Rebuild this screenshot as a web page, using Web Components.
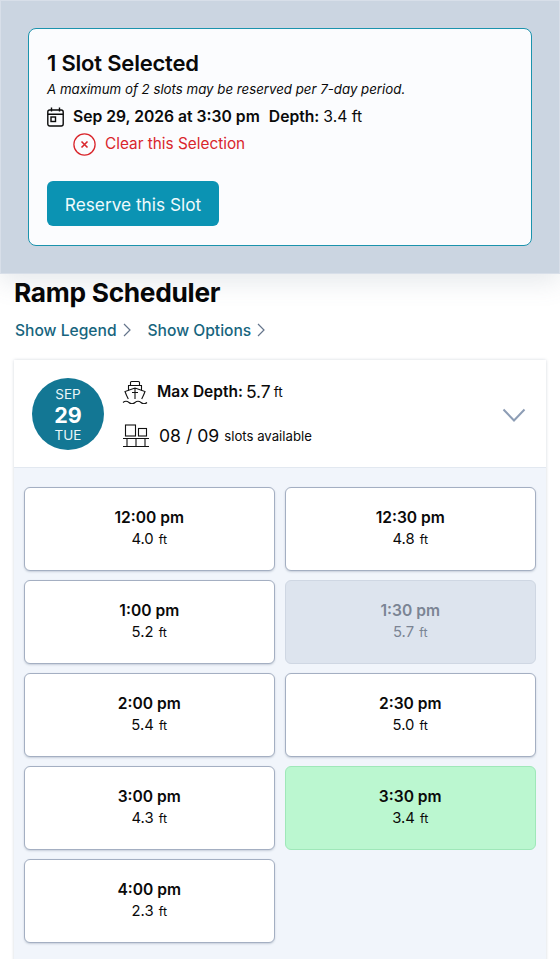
<!DOCTYPE html>
<html lang="en">
<head>
<meta charset="utf-8">
<title>Ramp Scheduler</title>
<style>
    html, body { margin: 0; height: 959px; overflow: hidden; background: #fff; }
    body { font-family: Inter, "Liberation Sans", sans-serif; color: #0a0a0a; }
</style>
</head>
<body>
<selection-panel></selection-panel>
<ramp-scheduler>
    <day-card month="SEP" day="29" weekday="TUE" depth="5.7" open="08" total="09">
        <time-slot time="12:00 pm" depth="4.0"></time-slot>
        <time-slot time="12:30 pm" depth="4.8"></time-slot>
        <time-slot time="1:00 pm" depth="5.2"></time-slot>
        <time-slot time="1:30 pm" depth="5.7" state="taken"></time-slot>
        <time-slot time="2:00 pm" depth="5.4"></time-slot>
        <time-slot time="2:30 pm" depth="5.0"></time-slot>
        <time-slot time="3:00 pm" depth="4.3"></time-slot>
        <time-slot time="3:30 pm" depth="3.4" state="selected"></time-slot>
        <time-slot time="4:00 pm" depth="2.3"></time-slot>
    </day-card>
</ramp-scheduler>
<script>
class SelectionPanel extends HTMLElement {
    constructor() {
        super();
        this.attachShadow({mode: 'open'});
        this.shadowRoot.innerHTML = `<style>
                :host {
                    display: block;
                    box-sizing: border-box;
                    height: 274px;
                    padding: 27px;
                    background: #cbd5e1;
                    border: 1px solid #d8dfe9;
                    position: relative;
                    z-index: 1;
                    box-shadow: 0 8px 24px rgba(100, 116, 139, .16);
                }
                .card {
                    box-sizing: border-box;
                    height: 218px;
                    padding: 20px 18px 0;
                    background: #fbfcfe;
                    border: 1px solid #1b93ad;
                    border-radius: 8px;
                }
                h2 { margin: 0; font-size: 22px; line-height: 28px; font-weight: 600; letter-spacing: -.2px; }
                .note { font-size: 13.27px; line-height: 20px; font-style: italic; margin-top: 2px; }
                .when { display: flex; align-items: center; gap: 9px; font-size: 15.7px; line-height: 22px; margin-top: 7px; font-weight: 600; }
                .when span span { font-weight: 400; }
                .clear { display: flex; align-items: center; gap: 9px; margin: 4px 0 0 26px; color: #d9262c; font-size: 15.35px; line-height: 24px; }
                button {
                    display: block;
                    width: 172px;
                    height: 45px;
                    margin-top: 25px;
                    padding: 1px 0 0;
                    border: 0;
                    border-radius: 6px;
                    background: #0b93b3;
                    color: #f0fafc;
                    font: 400 17.25px Inter, "Liberation Sans", sans-serif;
                }
                svg { display: block; flex: none; fill: none; stroke: currentColor; }
            </style>
            <div class="card">
                <h2>1 Slot Selected</h2>
                <div class="note">A maximum of 2 slots may be reserved per 7-day period.</div>
                <div class="when">
                    <svg width="17" height="20" viewBox="0 0 17 20" stroke-width="1.4">
                        <rect x=".8" y="3" width="15.4" height="16" rx="2"/>
                        <path d="M.8 7.2h15.4M4.5.6v4M12.5.6v4"/>
                        <rect x="4" y="10" width="4.5" height="4.5"/>
                    </svg>
                    <span>Sep 29, 2026 at 3:30 pm</span>
                    <span>Depth: <span>3.4 ft</span></span>
                </div>
                <div class="clear">
                    <svg width="23" height="23" viewBox="0 0 23 23" stroke-width="1.3">
                        <circle cx="11.5" cy="11.5" r="10.6"/>
                        <path stroke-width="1.6" d="M8.5 8.5l6 6M14.5 8.5l-6 6"/>
                    </svg>
                    <span>Clear this Selection</span>
                </div>
                <button type="button">Reserve this Slot</button>
            </div>`;
    }
}

class RampScheduler extends HTMLElement {
    constructor() {
        super();
        this.attachShadow({mode: 'open'});
        this.shadowRoot.innerHTML = `<style>
                :host { display: block; padding: 0 14px; }
                h1 { margin: 0; font-size: 26.3px; line-height: 36px; font-weight: 700; letter-spacing: -.3px; color: #050505; padding: 1px 0 0; }
                .links { display: flex; gap: 17px; margin: 8px 0 19px; height: 22px; align-items: center; padding-left: 1px; }
                .links a { display: flex; align-items: center; gap: 6px; color: #17657e; font-size: 15.6px; font-weight: 500; }
                svg { display: block; fill: none; stroke: #64748b; stroke-width: 1.2; }
            </style>
            <h1>Ramp Scheduler</h1>
            <div class="links">
                <a>Show Legend <svg width="8" height="14" viewBox="0 0 8 14"><path d="M1 1l6 6-6 6"/></svg></a>
                <a>Show Options <svg width="8" height="14" viewBox="0 0 8 14"><path d="M1 1l6 6-6 6"/></svg></a>
            </div>
            <slot></slot>`;
    }
}

class DayCard extends HTMLElement {
    connectedCallback() {
        if (this.shadowRoot) return;
        this.attachShadow({mode: 'open'});
        const a = n => this.getAttribute(n);
        this.shadowRoot.innerHTML = `<style>
                :host {
                    display: block;
                    box-sizing: border-box;
                    width: 532px;
                    height: 610px;
                    background: #f1f5fb;
                    box-shadow: 0 0 3px rgba(100, 116, 139, .28);
                }
                header {
                    box-sizing: border-box;
                    height: 108px;
                    display: flex;
                    align-items: center;
                    padding: 0 20px 0 18px;
                    background: #fff;
                    border-bottom: 1px solid #e2e8f0;
                }
                .date {
                    width: 72px;
                    height: 72px;
                    border-radius: 50%;
                    background: #137794;
                    color: #eaf6f9;
                    display: flex;
                    flex-direction: column;
                    align-items: center;
                    justify-content: center;
                    font-size: 13.5px;
                    line-height: 20px;
                    flex: none;
                    padding-top: 2px;
                    box-sizing: border-box;
                }
                .date b { font-size: 21.5px; line-height: 22px; font-weight: 700; color: #fff; }
                .date span:last-child { margin-top: -1px; }
                .info { flex: 1; margin-left: 18px; display: flex; flex-direction: column; gap: 14px; }
                .row { display: flex; align-items: center; height: 30px; }
                .row svg { margin-right: 9px; }
                .label { font-size: 15.5px; font-weight: 600; }
                .big { font-size: 17.5px; margin-left: 3px; }
                .unit { font-size: 13.5px; margin-left: 3px; }
                .count { font-size: 17.6px; }
                .small { font-size: 13.2px; margin-left: 5px; }
                .toggle { stroke: #8d9db5; stroke-width: 2; fill: none; display: block; margin-top: 2px; }
                svg.ico { fill: none; stroke: #111; stroke-width: 1.1; flex: none; display: block; }
                .grid {
                    display: grid;
                    grid-template-columns: 251.5px 251.5px;
                    grid-auto-rows: 84px;
                    gap: 9px 9.5px;
                    padding: 19px 9.5px 0;
                }
            </style>
            <header>
                <div class="date"><span>${a('month')}</span><b>${a('day')}</b><span>${a('weekday')}</span></div>
                <div class="info">
                    <div class="row">
                        <svg class="ico" width="26" height="24" viewBox="0 0 26 24">
                            <path d="M8.5 5.5V2.5q0-1 1-1h7q1 0 1 1v3M6 5.5h14M6.5 10.5V5.5M19.5 10.5V5.5"/>
                            <path d="M13 8L3 11.5q1.2 3.5 3.3 7.500M13 8l10 3.5q-1.2 3.5-3.3 7.500M13 8.5V19M10 12.5h6"/>
                            <path d="M1 22.5q3-2.4 6 0t6 0 6 0 6 0"/>
                        </svg>
                        <span class="label">Max Depth:</span><span class="big">${a('depth')}</span><span class="unit">ft</span>
                    </div>
                    <div class="row">
                        <svg class="ico" width="28" height="24" viewBox="0 0 28 24">
                            <rect x="3.5" y="1" width="10" height="11"/>
                            <rect x="16.5" y="4.5" width="8" height="7.5"/>
                            <path d="M1 14.5h26M1 22.5h26M5 14.5v8M14 14.5v8M23 14.5v8"/>
                        </svg>
                        <span class="count">${a('open')} / ${a('total')}</span><span class="small">slots available</span>
                    </div>
                </div>
                <svg class="toggle" width="24" height="14" viewBox="0 0 24 14"><path d="M1.5 1.5L12 12.500 22.500 1.500"/></svg>
            </header>
            <div class="grid"><slot></slot></div>`;
    }
}

class TimeSlot extends HTMLElement {
    connectedCallback() {
        if (this.shadowRoot) return;
        this.attachShadow({mode: 'open'});
        this.shadowRoot.innerHTML = `<style>
                :host {
                    display: flex;
                    flex-direction: column;
                    align-items: center;
                    justify-content: center;
                    box-sizing: border-box;
                    background: #fff;
                    border: 1px solid #a4afc2;
                    border-radius: 6px;
                    box-shadow: 0 1px 2px rgba(100, 116, 139, .3);
                    color: #0a0a0a;
                    padding-bottom: 3px;
                }
                :host([state="taken"]) { background: #dde4ee; border-color: #cfd7e3; box-shadow: none; color: #7b8494; }
                :host([state="selected"]) { background: #bbf7d0; border-color: #9fe8b9; box-shadow: none; }
                .t { font-size: 15.6px; line-height: 23px; font-weight: 600; }
                .d { font-size: 14.8px; line-height: 21px; }
                .d small { font-size: 12.5px; margin-left: 1px; }
            </style>
            <div class="t">${this.getAttribute('time')}</div>
            <div class="d">${this.getAttribute('depth')} <small>ft</small></div>`;
    }
}

customElements.define('selection-panel', SelectionPanel);
customElements.define('ramp-scheduler', RampScheduler);
customElements.define('day-card', DayCard);
customElements.define('time-slot', TimeSlot);
</script>
</body>
</html>
